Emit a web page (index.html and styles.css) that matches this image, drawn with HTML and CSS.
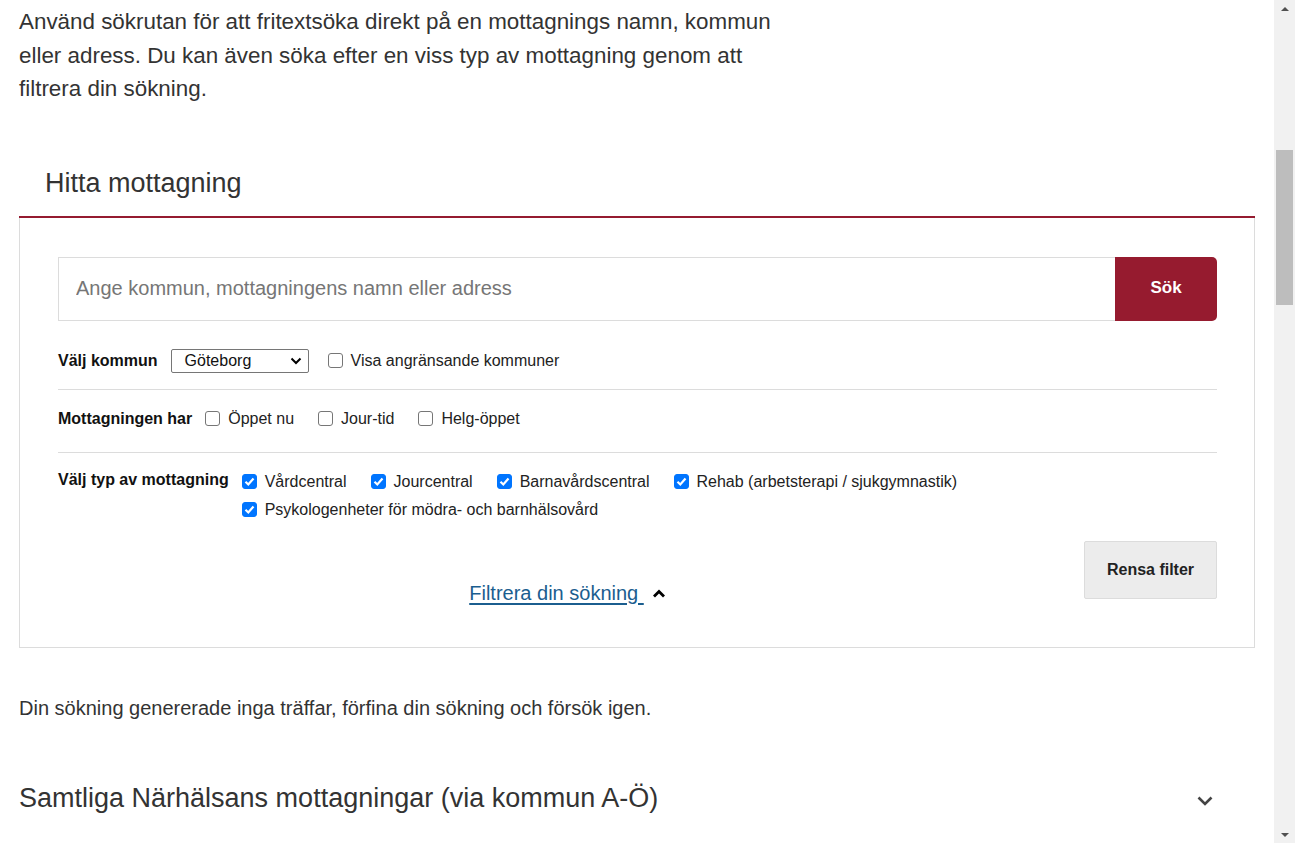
FILE: index.html
```html
<!DOCTYPE html>
<html lang="sv">
<head>
<meta charset="utf-8">
<title>Hitta mottagning</title>
<link rel="stylesheet" href="styles.css">
</head>
<body>
<div class="page">
  <main class="content">
    <p class="intro">Använd sökrutan för att fritextsöka direkt på en mottagnings namn, kommun eller adress. Du kan även söka efter en viss typ av mottagning genom att filtrera din sökning.</p>

    <section class="finder">
      <div class="finder-head"><h2>Hitta mottagning</h2></div>
      <div class="finder-box">
        <div class="search">
          <input class="search-input" type="text" placeholder="Ange kommun, mottagningens namn eller adress">
          <button class="search-btn">Sök</button>
        </div>

        <div class="row row-kommun">
          <span class="row-label">Välj kommun</span>
          <div class="row-items">
            <div class="select">
              <span>Göteborg</span>
              <svg class="select-arrow" width="12" height="8" viewBox="0 0 12 8"><polyline points="1.5,1.5 6,6 10.5,1.5" fill="none" stroke="#000" stroke-width="2"/></svg>
            </div>
            <label class="check"><span class="box"></span>Visa angränsande kommuner</label>
          </div>
        </div>

        <div class="row row-har">
          <span class="row-label">Mottagningen har</span>
          <div class="row-items">
            <label class="check"><span class="box"></span>Öppet nu</label>
            <label class="check"><span class="box"></span>Jour-tid</label>
            <label class="check"><span class="box"></span>Helg-öppet</label>
          </div>
        </div>

        <div class="row row-typ">
          <span class="row-label">Välj typ av mottagning</span>
          <div class="row-items wrap">
            <label class="check"><span class="box on"><svg viewBox="0 0 15 15" width="15" height="15"><polyline points="3.5,7.8 6.3,10.5 11.5,4.5" fill="none" stroke="#fff" stroke-width="2.2"/></svg></span>Vårdcentral</label>
            <label class="check"><span class="box on"><svg viewBox="0 0 15 15" width="15" height="15"><polyline points="3.5,7.8 6.3,10.5 11.5,4.5" fill="none" stroke="#fff" stroke-width="2.2"/></svg></span>Jourcentral</label>
            <label class="check"><span class="box on"><svg viewBox="0 0 15 15" width="15" height="15"><polyline points="3.5,7.8 6.3,10.5 11.5,4.5" fill="none" stroke="#fff" stroke-width="2.2"/></svg></span>Barnavårdscentral</label>
            <label class="check"><span class="box on"><svg viewBox="0 0 15 15" width="15" height="15"><polyline points="3.5,7.8 6.3,10.5 11.5,4.5" fill="none" stroke="#fff" stroke-width="2.2"/></svg></span>Rehab (arbetsterapi / sjukgymnastik)</label>
            <label class="check break"><span class="box on"><svg viewBox="0 0 15 15" width="15" height="15"><polyline points="3.5,7.8 6.3,10.5 11.5,4.5" fill="none" stroke="#fff" stroke-width="2.2"/></svg></span>Psykologenheter för mödra- och barnhälsovård</label>
          </div>
        </div>

        <div class="bottom">
          <div class="toggle">
            <a class="toggle-link" href="#">Filtrera din sökning </a>
            <svg class="toggle-icon" width="14" height="9" viewBox="0 0 14 9"><polyline points="2,7.5 7,2.5 12,7.5" fill="none" stroke="#000" stroke-width="2.8"/></svg>
          </div>
          <button class="clear-btn">Rensa filter</button>
        </div>
      </div>
    </section>

    <p class="noresult">Din sökning genererade inga träffar, förfina din sökning och försök igen.</p>

    <div class="all">
      <h2>Samtliga Närhälsans mottagningar (via kommun A-Ö)</h2>
      <svg width="16" height="10" viewBox="0 0 16 10"><polyline points="1.5,1.5 8,8 14.5,1.5" fill="none" stroke="#444" stroke-width="2.6"/></svg>
    </div>
  </main>

  <div class="scrollbar">
    <div class="sb-arrow sb-up"></div>
    <div class="sb-track"><div class="sb-thumb"></div></div>
    <div class="sb-arrow sb-down"></div>
  </div>
</div>
</body>
</html>
```

FILE: styles.css
```css
html, body {
  margin: 0;
  padding: 0;
  height: 100%;
  overflow: hidden;
  background: #fff;
}

body {
  font-family: "Liberation Sans", Arial, sans-serif;
  color: #333;
}

.page {
  display: flex;
  height: 843px;
}

.content {
  flex: 0 0 1274px;
  box-sizing: border-box;
  padding: 5px 19px 0 19px;
}

.intro {
  margin: 0;
  max-width: 780px;
  font-size: 22.4px;
  line-height: 33.5px;
  color: #333;
}

.finder {
  margin-top: 61px;
}

.finder-head {
  padding: 0 26px 17px;
  border-bottom: 2px solid #951b30;
}

.finder-head h2 {
  margin: 0;
  font-size: 27px;
  font-weight: normal;
  line-height: 32px;
  color: #333;
}

.finder-box {
  border: 1px solid #dcdcdc;
  border-top: none;
  padding: 39px 37px 48px 38px;
}

.search {
  display: flex;
  height: 64px;
}

.search-input {
  flex: 1;
  box-sizing: border-box;
  height: 64px;
  border: 1px solid #dcdcdc;
  border-right: none;
  padding: 0 17px;
  font-family: "Liberation Sans", Arial, sans-serif;
  font-size: 20px;
  color: #333;
  outline: none;
}

.search-input::placeholder {
  color: #767676;
}

.search-btn {
  flex: 0 0 102px;
  height: 64px;
  border: none;
  border-radius: 0 5px 5px 0;
  background: #961b2f;
  color: #fff;
  font-family: "Liberation Sans", Arial, sans-serif;
  font-size: 17px;
  font-weight: bold;
  padding: 0 0 2px;
}

.row {
  display: flex;
  align-items: flex-start;
  border-bottom: 1px solid #dcdcdc;
}

.row-kommun {
  padding: 28px 0 16px;
  align-items: center;
}

.row-har {
  padding: 17px 0 21px;
}

.row-typ {
  border-bottom: none;
  padding: 15px 0 0;
}

.row-label {
  flex: none;
  font-size: 16px;
  font-weight: bold;
  color: #111;
  line-height: 24px;
  margin-right: 13px;
}

.row-typ .row-label {
  line-height: 28px;
  margin-top: -2px;
}

.row-items {
  display: flex;
  align-items: center;
  column-gap: 24px;
}

.row-items.wrap {
  flex-wrap: wrap;
  row-gap: 0;
  width: 760px;
}

.check {
  display: flex;
  align-items: center;
  font-size: 16px;
  line-height: 24px;
  color: #222;
}

.row-typ .check {
  line-height: 28px;
}

.break {
  flex-basis: 100%;
}

.box {
  flex: none;
  box-sizing: border-box;
  width: 15px;
  height: 15px;
  border: 1px solid #767676;
  border-radius: 3px;
  margin-right: 8px;
  background: #fff;
  display: flex;
}

.box.on {
  background: #0075ff;
  border-color: #0075ff;
}

.box.on svg {
  margin: -1px;
}

.select {
  box-sizing: border-box;
  width: 138px;
  height: 24px;
  border: 1px solid #767676;
  border-radius: 2px;
  display: flex;
  align-items: center;
  justify-content: space-between;
  padding: 0 6px 0 13px;
  font-size: 16px;
  color: #111;
  margin-right: 19px;
}

.row-kommun .row-items {
  column-gap: 0;
}

.bottom {
  display: flex;
  align-items: flex-end;
  margin-top: 17px;
}

.toggle {
  flex: 1;
  display: flex;
  justify-content: center;
  align-items: center;
  margin-bottom: -6px;
  padding-right: 7px;
}

.toggle-link {
  font-size: 20px;
  color: #1b5e8f;
  text-decoration: underline;
  text-decoration-thickness: 2px;
  text-underline-offset: 3px;
  white-space: pre;
  line-height: 24px;
}

.toggle-icon {
  margin-left: 8px;
  margin-top: 1px;
}

.clear-btn {
  flex: 0 0 133px;
  height: 58px;
  border: 1px solid #dcdcdc;
  border-radius: 2px;
  background: #ececec;
  font-family: "Liberation Sans", Arial, sans-serif;
  font-size: 16px;
  font-weight: bold;
  color: #222;
}

.noresult {
  margin: 48px 0 0;
  font-size: 20px;
  line-height: 24px;
  color: #333;
}

.all {
  display: flex;
  align-items: center;
  justify-content: space-between;
  margin-top: 62px;
  padding-right: 42px;
}

.all h2 {
  margin: 0;
  font-size: 27px;
  font-weight: normal;
  line-height: 32px;
  color: #333;
}

.all svg {
  margin-top: 6px;
}

.scrollbar {
  flex: 0 0 21px;
  background: #f1f1f1;
  display: flex;
  flex-direction: column;
  align-items: center;
}

.sb-arrow {
  flex: none;
  height: 17px;
  width: 21px;
  display: flex;
  align-items: center;
  justify-content: center;
}

.sb-up::before {
  content: "";
  border-left: 4px solid transparent;
  border-right: 4px solid transparent;
  border-bottom: 4px solid #505050;
}

.sb-down::before {
  content: "";
  border-left: 4px solid transparent;
  border-right: 4px solid transparent;
  border-top: 4px solid #505050;
}

.sb-track {
  flex: 1;
  width: 17px;
  padding-top: 133px;
}

.sb-thumb {
  height: 155px;
  background: #bdbdbd;
}
```
